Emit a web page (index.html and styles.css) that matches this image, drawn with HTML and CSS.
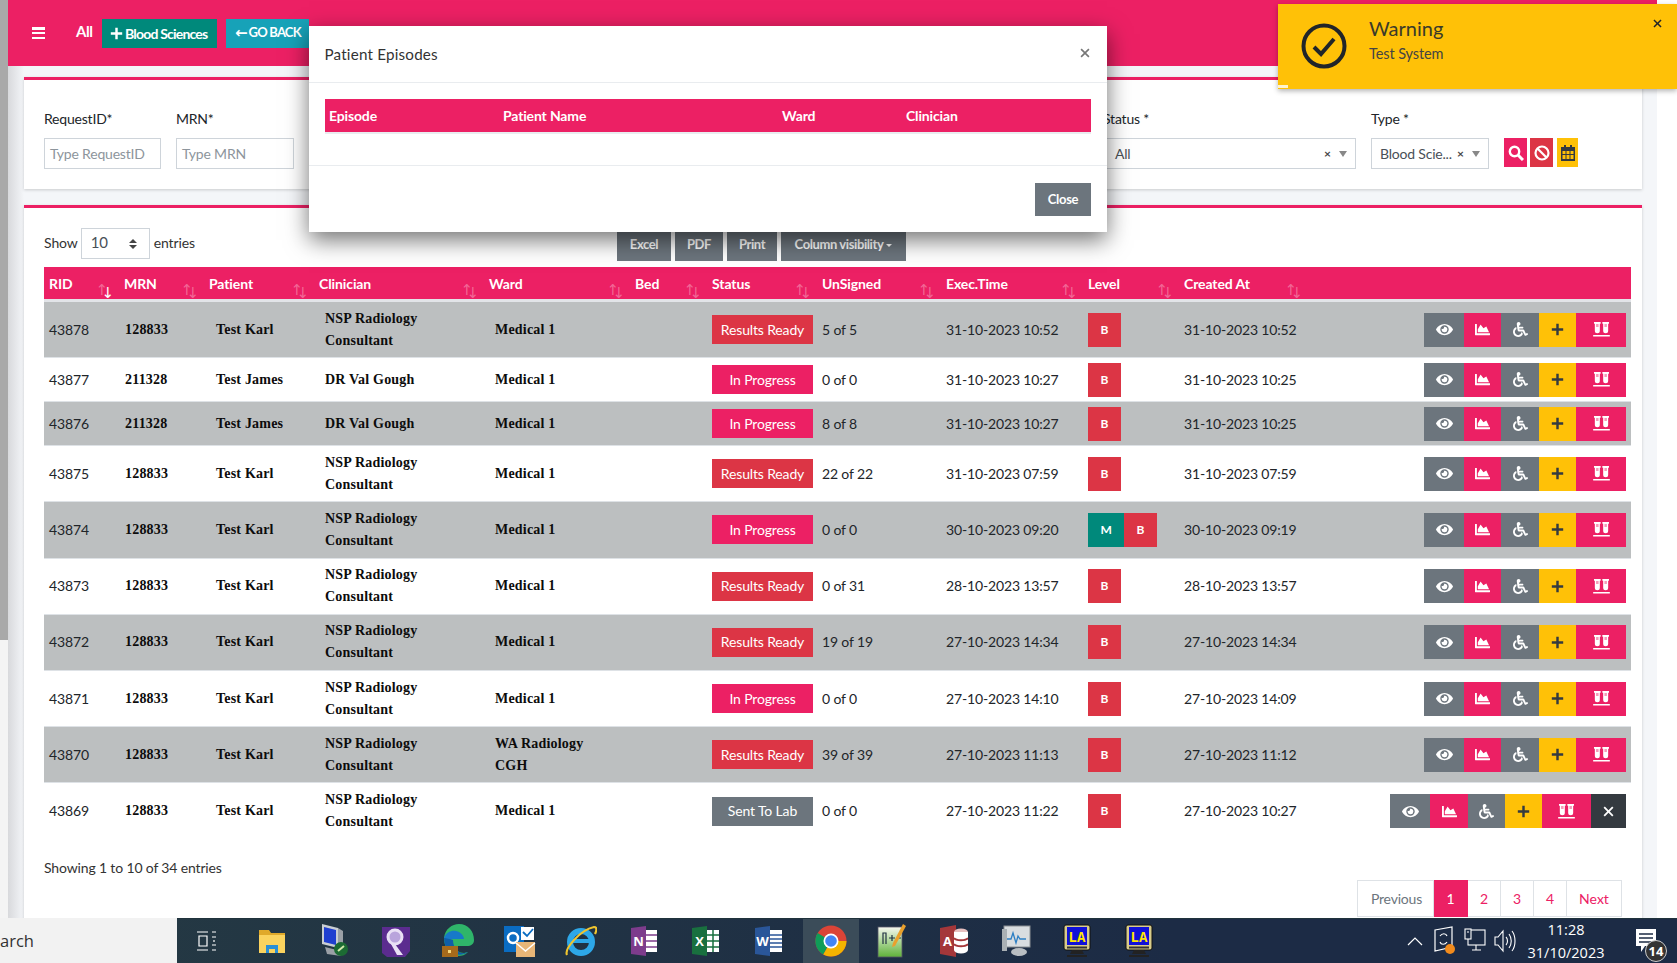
FILE: index.html
```html
<!DOCTYPE html>
<html lang="en">
<head>
<meta charset="utf-8">
<title>Patient Episodes</title>
<link rel="stylesheet" href="styles.css">
</head>
<body>
<svg class="defs" width="0" height="0" aria-hidden="true">
  <symbol id="i-eye" viewBox="0 0 576 512"><path d="M572.52 241.4C518.29 135.59 410.93 64 288 64S57.68 135.64 3.48 241.41a32.35 32.35 0 0 0 0 29.19C57.71 376.41 165.07 448 288 448s230.32-71.64 284.52-177.41a32.35 32.35 0 0 0 0-29.19zM288 400a144 144 0 1 1 144-144 143.93 143.93 0 0 1-144 144zm0-240a95.31 95.31 0 0 0-25.31 3.79 47.85 47.85 0 0 1-66.9 66.9A95.78 95.78 0 1 0 288 160z"/></symbol>
  <symbol id="i-chart" viewBox="0 0 512 512"><path d="M500 384c6.6 0 12 5.4 12 12v40c0 6.6-5.4 12-12 12H12c-6.6 0-12-5.4-12-12V76c0-6.6 5.4-12 12-12h40c6.6 0 12 5.4 12 12v308h436zM372.7 159.5L288 216l-85.3-113.7c-5.1-6.8-15.5-6.3-19.9 1L96 248v104h384l-89.9-187.8c-3.2-6.5-11.4-8.7-17.4-4.7z"/></symbol>
  <symbol id="i-wheel" viewBox="0 0 512 512"><path d="M496.101 385.669l14.227 28.663c3.929 7.915.697 17.516-7.218 21.445l-65.465 32.886c-16.049 7.967-35.556 1.194-43.189-15.055L331.679 320H192c-15.925 0-29.426-11.71-31.679-27.475C126.433 55.308 128.38 70.044 128 64c0-36.358 30.318-65.635 67.052-63.929 33.271 1.545 60.048 28.905 60.925 62.201.868 32.933-23.152 60.423-54.608 65.039l4.67 32.69H336c8.837 0 16 7.163 16 16v32c0 8.837-7.163 16-16 16H215.182l4.572 32H352a32 32 0 0 1 28.962 18.392L438.477 396.8l36.178-18.349c7.915-3.929 17.517-.697 21.446 7.218zM311.358 352h-24.506c-7.788 54.204-54.528 96-110.852 96-61.757 0-112-50.243-112-112 0-41.505 22.694-77.809 56.324-97.156-3.712-25.965-6.844-47.86-9.488-66.333C45.956 198.464 0 261.963 0 336c0 97.047 78.953 176 176 176 71.87 0 133.806-43.308 161.11-105.192L311.358 352z"/></symbol>
  <symbol id="i-plus" viewBox="0 0 16 16"><path d="M6.500 1h3v5.500H15v3H9.500V15h-3V9.500H1v-3h5.500z"/></symbol>
  <symbol id="i-vials" viewBox="0 0 20 18"><path d="M1 0h8v2H8v8.500a3 3 0 0 1-6 0V2H1zM11 0h8v2h-1v8.500a3 3 0 0 1-6 0V2h-1zM0 15.500h20V17.500H0z"/><path class="liquid" d="M3.500 2.500h3V6h-3zM13.500 2.500h3V6h-3z"/></symbol>
  <symbol id="i-x" viewBox="0 0 12 12"><path d="M2 .6 6 4.600 10 .6 11.400 2 7.400 6l4 4-1.400 1.400-4-4-4 4L.6 10l4-4-4-4z"/></symbol>
</svg>

<div class="app">
  <div class="page">
    <div class="strip"></div>
    <main class="main">
      <header class="topbar">
        <span class="burger"><i></i><i></i><i></i></span>
        <span class="top-all">All</span>
        <a class="top-btn teal"><svg class="ic-13"><use href="#i-plus"/></svg>Blood Sciences</a>
        <a class="top-btn cyan"><span class="back-arrow">&#8592;</span>GO BACK</a>
      </header>

      <section class="card filter">
        <div class="field f-req"><label>RequestID*</label><div class="input ph">Type RequestID</div></div>
        <div class="field f-mrn"><label>MRN*</label><div class="input ph">Type MRN</div></div>
        <div class="filter-gap"></div>
        <div class="field f-status"><label>Status *</label>
          <div class="input sel"><span class="sel-text">All</span><span class="sel-x">&#215;</span><span class="sel-caret"></span></div></div>
        <div class="field f-type"><label>Type *</label>
          <div class="input sel"><span class="sel-text">Blood Scie...</span><span class="sel-x">&#215;</span><span class="sel-caret"></span></div></div>
        <div class="tools">
          <a class="tool pink"><svg width="16" height="16" viewBox="0 0 16 16" fill="none" stroke="#fff" stroke-width="2.400"><circle cx="6.500" cy="6.500" r="4.700"/><path d="M10 10l5 5" stroke-width="3"/></svg></a>
          <a class="tool red"><svg width="16" height="16" viewBox="0 0 16 16" fill="none" stroke="#fff" stroke-width="2.200"><circle cx="8" cy="8" r="6.500"/><path d="M3.500 3.500l9 9"/></svg></a>
          <a class="tool amber narrow"><svg width="14" height="16" viewBox="0 0 14 16"><path fill="#343a40" d="M3 0h2v2h4V0h2v2h3v14H0V2h3zM1.500 6v3h3V6zm4 0v3h3V6zm4 0v3h3V6zm-8 4v4h3v-4zm4 0v4h3v-4zm4 0v4h3v-4z"/></svg></a>
        </div>
      </section>

      <section class="card results">
        <div class="dt-top">
          <div class="len"><span class="len-txt">Show</span> <span class="len-select">10<span class="updown"></span></span> <span class="len-txt">entries</span></div>
          <div class="exports">
            <a class="exp">Excel</a><a class="exp">PDF</a><a class="exp">Print</a><a class="exp exp-col">Column visibility<span class="mini-caret"></span></a>
          </div>
        </div>

        <table class="grid">
          <colgroup>
            <col class="c1"><col class="c2"><col class="c3"><col class="c4"><col class="c5"><col class="c6"><col class="c7"><col class="c8"><col class="c9"><col class="c10"><col class="c11"><col class="c12">
          </colgroup>
          <thead>
            <tr>
              <th class="sort first">RID</th><th class="sort">MRN</th><th class="sort">Patient</th><th class="sort">Clinician</th><th class="sort">Ward</th><th class="sort">Bed</th><th class="sort">Status</th><th class="sort">UnSigned</th><th class="sort">Exec.Time</th><th class="sort">Level</th><th class="sort">Created At</th><th></th>
            </tr>
          </thead>
          <tbody>
            <tr class="odd tall"><td>43878</td><td class="mrn">128833</td><td class="sf pat">Test Karl</td><td class="sf">NSP Radiology<br>Consultant</td><td class="sf">Medical 1</td><td></td><td><span class="st red">Results Ready</span></td><td>5 of 5</td><td>31-10-2023 10:52</td><td><span class="lv red">B</span></td><td>31-10-2023 10:52</td>
              <td class="acts"><span class="act-group"><a class="act a1 gray"><svg class="ic-eye"><use href="#i-eye"/></svg></a><a class="act a2 pink"><svg class="ic-16"><use href="#i-chart"/></svg></a><a class="act a3 gray"><svg class="ic-16"><use href="#i-wheel"/></svg></a><a class="act a4 amber"><svg class="ic-13 dark"><use href="#i-plus"/></svg></a><a class="act a5 pink"><svg class="ic-vials"><use href="#i-vials"/></svg></a></span></td></tr>
            <tr class="short"><td>43877</td><td class="mrn">211328</td><td class="sf pat">Test James</td><td class="sf">DR Val Gough</td><td class="sf">Medical 1</td><td></td><td><span class="st pink">In Progress</span></td><td>0 of 0</td><td>31-10-2023 10:27</td><td><span class="lv red">B</span></td><td>31-10-2023 10:25</td>
              <td class="acts"><span class="act-group"><a class="act a1 gray"><svg class="ic-eye"><use href="#i-eye"/></svg></a><a class="act a2 pink"><svg class="ic-16"><use href="#i-chart"/></svg></a><a class="act a3 gray"><svg class="ic-16"><use href="#i-wheel"/></svg></a><a class="act a4 amber"><svg class="ic-13 dark"><use href="#i-plus"/></svg></a><a class="act a5 pink"><svg class="ic-vials"><use href="#i-vials"/></svg></a></span></td></tr>
            <tr class="odd short"><td>43876</td><td class="mrn">211328</td><td class="sf pat">Test James</td><td class="sf">DR Val Gough</td><td class="sf">Medical 1</td><td></td><td><span class="st pink">In Progress</span></td><td>8 of 8</td><td>31-10-2023 10:27</td><td><span class="lv red">B</span></td><td>31-10-2023 10:25</td>
              <td class="acts"><span class="act-group"><a class="act a1 gray"><svg class="ic-eye"><use href="#i-eye"/></svg></a><a class="act a2 pink"><svg class="ic-16"><use href="#i-chart"/></svg></a><a class="act a3 gray"><svg class="ic-16"><use href="#i-wheel"/></svg></a><a class="act a4 amber"><svg class="ic-13 dark"><use href="#i-plus"/></svg></a><a class="act a5 pink"><svg class="ic-vials"><use href="#i-vials"/></svg></a></span></td></tr>
            <tr class="tall"><td>43875</td><td class="mrn">128833</td><td class="sf pat">Test Karl</td><td class="sf">NSP Radiology<br>Consultant</td><td class="sf">Medical 1</td><td></td><td><span class="st red">Results Ready</span></td><td>22 of 22</td><td>31-10-2023 07:59</td><td><span class="lv red">B</span></td><td>31-10-2023 07:59</td>
              <td class="acts"><span class="act-group"><a class="act a1 gray"><svg class="ic-eye"><use href="#i-eye"/></svg></a><a class="act a2 pink"><svg class="ic-16"><use href="#i-chart"/></svg></a><a class="act a3 gray"><svg class="ic-16"><use href="#i-wheel"/></svg></a><a class="act a4 amber"><svg class="ic-13 dark"><use href="#i-plus"/></svg></a><a class="act a5 pink"><svg class="ic-vials"><use href="#i-vials"/></svg></a></span></td></tr>
            <tr class="odd tall"><td>43874</td><td class="mrn">128833</td><td class="sf pat">Test Karl</td><td class="sf">NSP Radiology<br>Consultant</td><td class="sf">Medical 1</td><td></td><td><span class="st pink">In Progress</span></td><td>0 of 0</td><td>30-10-2023 09:20</td><td><span class="lv teal">M</span><span class="lv red">B</span></td><td>30-10-2023 09:19</td>
              <td class="acts"><span class="act-group"><a class="act a1 gray"><svg class="ic-eye"><use href="#i-eye"/></svg></a><a class="act a2 pink"><svg class="ic-16"><use href="#i-chart"/></svg></a><a class="act a3 gray"><svg class="ic-16"><use href="#i-wheel"/></svg></a><a class="act a4 amber"><svg class="ic-13 dark"><use href="#i-plus"/></svg></a><a class="act a5 pink"><svg class="ic-vials"><use href="#i-vials"/></svg></a></span></td></tr>
            <tr class="tall"><td>43873</td><td class="mrn">128833</td><td class="sf pat">Test Karl</td><td class="sf">NSP Radiology<br>Consultant</td><td class="sf">Medical 1</td><td></td><td><span class="st red">Results Ready</span></td><td>0 of 31</td><td>28-10-2023 13:57</td><td><span class="lv red">B</span></td><td>28-10-2023 13:57</td>
              <td class="acts"><span class="act-group"><a class="act a1 gray"><svg class="ic-eye"><use href="#i-eye"/></svg></a><a class="act a2 pink"><svg class="ic-16"><use href="#i-chart"/></svg></a><a class="act a3 gray"><svg class="ic-16"><use href="#i-wheel"/></svg></a><a class="act a4 amber"><svg class="ic-13 dark"><use href="#i-plus"/></svg></a><a class="act a5 pink"><svg class="ic-vials"><use href="#i-vials"/></svg></a></span></td></tr>
            <tr class="odd tall"><td>43872</td><td class="mrn">128833</td><td class="sf pat">Test Karl</td><td class="sf">NSP Radiology<br>Consultant</td><td class="sf">Medical 1</td><td></td><td><span class="st red">Results Ready</span></td><td>19 of 19</td><td>27-10-2023 14:34</td><td><span class="lv red">B</span></td><td>27-10-2023 14:34</td>
              <td class="acts"><span class="act-group"><a class="act a1 gray"><svg class="ic-eye"><use href="#i-eye"/></svg></a><a class="act a2 pink"><svg class="ic-16"><use href="#i-chart"/></svg></a><a class="act a3 gray"><svg class="ic-16"><use href="#i-wheel"/></svg></a><a class="act a4 amber"><svg class="ic-13 dark"><use href="#i-plus"/></svg></a><a class="act a5 pink"><svg class="ic-vials"><use href="#i-vials"/></svg></a></span></td></tr>
            <tr class="tall"><td>43871</td><td class="mrn">128833</td><td class="sf pat">Test Karl</td><td class="sf">NSP Radiology<br>Consultant</td><td class="sf">Medical 1</td><td></td><td><span class="st pink">In Progress</span></td><td>0 of 0</td><td>27-10-2023 14:10</td><td><span class="lv red">B</span></td><td>27-10-2023 14:09</td>
              <td class="acts"><span class="act-group"><a class="act a1 gray"><svg class="ic-eye"><use href="#i-eye"/></svg></a><a class="act a2 pink"><svg class="ic-16"><use href="#i-chart"/></svg></a><a class="act a3 gray"><svg class="ic-16"><use href="#i-wheel"/></svg></a><a class="act a4 amber"><svg class="ic-13 dark"><use href="#i-plus"/></svg></a><a class="act a5 pink"><svg class="ic-vials"><use href="#i-vials"/></svg></a></span></td></tr>
            <tr class="odd tall"><td>43870</td><td class="mrn">128833</td><td class="sf pat">Test Karl</td><td class="sf">NSP Radiology<br>Consultant</td><td class="sf">WA Radiology<br>CGH</td><td></td><td><span class="st red">Results Ready</span></td><td>39 of 39</td><td>27-10-2023 11:13</td><td><span class="lv red">B</span></td><td>27-10-2023 11:12</td>
              <td class="acts"><span class="act-group"><a class="act a1 gray"><svg class="ic-eye"><use href="#i-eye"/></svg></a><a class="act a2 pink"><svg class="ic-16"><use href="#i-chart"/></svg></a><a class="act a3 gray"><svg class="ic-16"><use href="#i-wheel"/></svg></a><a class="act a4 amber"><svg class="ic-13 dark"><use href="#i-plus"/></svg></a><a class="act a5 pink"><svg class="ic-vials"><use href="#i-vials"/></svg></a></span></td></tr>
            <tr class="tall"><td>43869</td><td class="mrn">128833</td><td class="sf pat">Test Karl</td><td class="sf">NSP Radiology<br>Consultant</td><td class="sf">Medical 1</td><td></td><td><span class="st gray">Sent To Lab</span></td><td>0 of 0</td><td>27-10-2023 11:22</td><td><span class="lv red">B</span></td><td>27-10-2023 10:27</td>
              <td class="acts"><span class="act-group"><a class="act a1 gray"><svg class="ic-eye"><use href="#i-eye"/></svg></a><a class="act a3 pink"><svg class="ic-16"><use href="#i-chart"/></svg></a><a class="act a4 gray"><svg class="ic-16"><use href="#i-wheel"/></svg></a><a class="act a4 amber"><svg class="ic-13 dark"><use href="#i-plus"/></svg></a><a class="act a5b pink"><svg class="ic-vials"><use href="#i-vials"/></svg></a><a class="act a6 dark-bg"><svg class="ic-11"><use href="#i-x"/></svg></a></span></td></tr>
          </tbody>
        </table>

        <div class="dt-info">Showing 1 to 10 of 34 entries</div>
        <nav class="pager">
          <a class="pg prev">Previous</a><a class="pg on">1</a><a class="pg">2</a><a class="pg">3</a><a class="pg">4</a><a class="pg next">Next</a>
        </nav>
      </section>
    </main>
  </div>

  <footer class="taskbar">
    <div class="search">arch</div>
    <div class="tb-icons">
      <span class="tb t-view"><svg width="22" height="22" viewBox="0 0 22 22" fill="none" stroke="#fff" stroke-width="1.200"><path d="M1 2h11M1 20h11M3 6h8v10H3zM16 2h4M16 20h4M16 7h4M16 15h4M18 10v2"/></svg></span>
      <span class="tb t-files"><svg width="28" height="28" viewBox="0 0 28 28"><path fill="#e0a92a" d="M1 3h10l2 3h14v20H1z"/><path fill="#fbd35e" d="M1 8h26v18H1z"/><path fill="#2a8fd6" d="M8 18h12v8h-3v-4h-6v4H8z"/></svg></span>
      <span class="tb t-net"><svg width="30" height="34" viewBox="0 0 30 34"><path fill="#c9ced3" d="M3 0l16 4v20L3 20z"/><path fill="#1f3fd0" d="M5 3l12 3v15L5 18z"/><path fill="#9aa0a6" d="M19 4l5 3v18l-5-1zM6 23l16 4v5l-14-2z"/><circle cx="22" cy="25" r="7" fill="#1c6b33"/><path d="M19 27l6-5" stroke="#cfe8a8" stroke-width="2"/></svg></span>
      <span class="tb t-q"><svg width="30" height="34" viewBox="0 0 30 34"><path fill="#5b2c8f" d="M2 3h28v24l-5 6H7l-5-4z"/><circle cx="15" cy="13" r="7" fill="#b9a4dc" stroke="#e9e0f5" stroke-width="3"/><path d="M15 20l8 11h-6l-6-11z" fill="#e9e0f5"/></svg></span>
      <span class="tb t-edge"><svg width="32" height="34" viewBox="0 0 32 34"><path fill="#2fb56a" d="M2 14C3 5 10 0 17 0c9 0 15 7 15 16 0 4-3 6-7 6H13c0 4 4 7 9 7l4-1c-3 3-6 4-10 4C8 32 2 24 2 14z"/><path fill="#1779c9" d="M2 14c2-6 8-8 12-7 5 1 8 5 8 8H11c-3 0-9 3-9-1z"/><path fill="#0f5ea8" d="M11 16c0 9 7 16 15 12-8 6-24 2-24-14 2 0 6 1 9 2z"/><rect x="0" y="22" width="16" height="11" fill="#a66a1c"/><rect x="6" y="26" width="3" height="3" fill="#f7d67a"/></svg></span>
      <span class="tb t-out"><svg width="32" height="34" viewBox="0 0 32 34"><rect x="0" y="2" width="20" height="26" fill="#0a6cc2"/><circle cx="9" cy="14" r="5" fill="none" stroke="#fff" stroke-width="2.500"/><rect x="17" y="3" width="13" height="13" fill="#fff"/><path d="M19 8l4 4 6-7" fill="none" stroke="#0a6cc2" stroke-width="1.800"/><rect x="12" y="18" width="19" height="15" fill="#e8b677"/><path d="M12 19l9.500 8L31 19" fill="none" stroke="#fff" stroke-width="1.500"/></svg></span>
      <span class="tb t-ie"><svg width="32" height="32" viewBox="0 0 32 32"><circle cx="16" cy="17" r="11" fill="none" stroke="#2da7e8" stroke-width="6"/><path d="M7 16h18" stroke="#2da7e8" stroke-width="4"/><path d="M2 30C-1 24 15 5 29 2c3 0 3 3 1 7" fill="none" stroke="#f0c52f" stroke-width="2.200"/></svg></span>
      <span class="tb t-one"><svg width="28" height="30" viewBox="0 0 28 30"><path fill="#7d3c8c" d="M0 2l15-2v30L0 28z"/><rect x="15" y="4" width="11" height="22" fill="#fff"/><path d="M15 9h11M15 15h11M15 21h11" stroke="#7d3c8c" stroke-width="1.500"/><text class="ms-l" x="7.500" y="20">N</text></svg></span>
      <span class="tb t-xl"><svg width="28" height="30" viewBox="0 0 28 30"><path fill="#19703f" d="M0 2l15-2v30L0 28z"/><rect x="15" y="4" width="12" height="22" fill="#fff"/><path d="M15 9h12M15 15h12M15 21h12M21 4v22" stroke="#19703f" stroke-width="1.500"/><text class="ms-l" x="7.500" y="20">X</text></svg></span>
      <span class="tb t-wd"><svg width="28" height="30" viewBox="0 0 28 30"><path fill="#2a5699" d="M0 2l15-2v30L0 28z"/><rect x="15" y="4" width="12" height="22" fill="#fff"/><path d="M15 9h12M15 13h12M15 17h12M15 21h12" stroke="#2a5699" stroke-width="1.500"/><text class="ms-l" x="7.500" y="20">W</text></svg></span>
      <span class="tb t-ch active"><svg width="32" height="32" viewBox="0 0 32 32"><circle cx="16" cy="16" r="15.500" fill="#db4437"/><path fill="#0f9d58" d="M16 16L8.300 29.500A15.500 15.500 0 0 1 2.600 8z"/><path fill="#f4b400" d="M16 16h15.500A15.500 15.500 0 0 1 8.300 29.500z"/><circle cx="16" cy="16" r="7.500" fill="#fff"/><circle cx="16" cy="16" r="5.800" fill="#4285f4"/></svg></span>
      <span class="tb t-np"><svg width="30" height="34" viewBox="0 0 30 34"><defs><linearGradient id="npg" x1="0" y1="0" x2="0" y2="1"><stop offset="0" stop-color="#f5f7ef"/><stop offset="1" stop-color="#5fb23a"/></linearGradient></defs><rect x="1" y="3" width="24" height="30" fill="url(#npg)" stroke="#556" stroke-width=".8"/><path d="M6 20V9h3v11M12 14h6M15 11v6M20 14h4" stroke="#234" stroke-width="1.200" fill="none"/><path d="M26 0l3 2-11 20-3 1 1-4z" fill="#e9a02c"/></svg></span>
      <span class="tb t-ac"><svg width="28" height="32" viewBox="0 0 28 32"><path fill="#a4373a" d="M0 3l16-3v32L0 29z"/><ellipse cx="21" cy="7" rx="7" ry="3.500" fill="#e8c1c1"/><rect x="14" y="7" width="14" height="18" fill="#fff"/><ellipse cx="21" cy="25" rx="7" ry="3.500" fill="#fff"/><path d="M14 13c2 3 12 3 14 0M14 19c2 3 12 3 14 0" stroke="#a4373a" stroke-width="2" fill="none"/><text class="ms-l" x="7.500" y="21">A</text></svg></span>
      <span class="tb t-pm"><svg width="30" height="32" viewBox="0 0 30 32"><rect x="3" y="1" width="26" height="21" fill="#d9dde0" stroke="#8b9094"/><path d="M5 14h5l2-6 3 10 2-7 2 3h6" fill="none" stroke="#2d7fc4" stroke-width="1.300"/><rect x="1" y="4" width="5" height="22" fill="#aab0b4"/><ellipse cx="18" cy="27" rx="8" ry="4" fill="#b9bec2"/></svg></span>
      <span class="tb t-la"><svg width="28" height="34" viewBox="0 0 28 34"><rect x="1" y="1" width="26" height="25" rx="2" fill="#d8cb8a" stroke="#111"/><rect x="4" y="3" width="20" height="18" fill="#1010d8"/><text class="la-l" x="14" y="18">LA</text><rect x="4" y="22.500" width="20" height="2" fill="#333"/><path d="M9 26h10l2 4H7zM4 31h20v2H4z" fill="#222"/></svg></span>
      <span class="tb t-la"><svg width="28" height="34" viewBox="0 0 28 34"><rect x="1" y="1" width="26" height="25" rx="2" fill="#d8cb8a" stroke="#111"/><rect x="4" y="3" width="20" height="18" fill="#1010d8"/><text class="la-l" x="14" y="18">LA</text><rect x="4" y="22.500" width="20" height="2" fill="#333"/><path d="M9 26h10l2 4H7zM4 31h20v2H4z" fill="#222"/></svg></span>
    </div>
    <div class="tray">
      <svg class="tr-up" width="16" height="10" viewBox="0 0 16 10" fill="none" stroke="#fff" stroke-width="1.200"><path d="M1 9l7-7 7 7"/></svg>
      <svg class="tr-sync" width="22" height="30" viewBox="0 0 22 30"><path fill="none" stroke="#fff" stroke-width="1.200" d="M1 4l17-3v20L1 25z"/><path fill="none" stroke="#fff" stroke-width="1.200" d="M6 10c2-3 6-3 7 0M13 16c-2 3-6 3-7 0"/><circle cx="16" cy="23" r="5" fill="#f28b1c"/></svg>
      <svg class="tr-net" width="22" height="26" viewBox="0 0 22 26" fill="none" stroke="#fff" stroke-width="1.100"><rect x="4" y="2" width="17" height="15"/><rect x="1" y="1" width="6" height="10" fill="#1c2b44"/><path d="M3 4h2M12 17v5M8 22h9"/></svg>
      <svg class="tr-vol" width="22" height="26" viewBox="0 0 22 26" fill="none" stroke="#fff" stroke-width="1.100"><path d="M1 9h3l5-6v20l-5-6H1zM12 9c2 2 2 6 0 8M15 6c3 4 3 10 0 14M18 3c4 5 4 15 0 20"/></svg>
      <div class="clock"><span>11:28</span><span>31/10/2023</span></div>
      <span class="notif"><svg width="20" height="24" viewBox="0 0 20 24"><path fill="#fff" d="M0 0h20v17H9l-4 6v-6H0z"/><path stroke="#1c2b44" stroke-width="1.400" d="M3 5h14M3 9h14M3 13h14"/></svg><b class="notif-n">14</b></span>
    </div>
  </footer>

  <div class="modal" role="dialog">
    <div class="modal-head"><h5>Patient Episodes</h5><svg class="modal-x"><use href="#i-x"/></svg></div>
    <div class="modal-body">
      <div class="ep-head"><span class="ep1">Episode</span><span class="ep2">Patient Name</span><span class="ep3">Ward</span><span class="ep4">Clinician</span></div>
    </div>
    <div class="modal-foot"><a class="close-btn">Close</a></div>
  </div>

  <div class="toast">
    <svg class="toast-ic" width="46" height="46" viewBox="0 0 46 46" fill="none" stroke="#212529"><circle cx="23" cy="23" r="20.500" stroke-width="4"/><path d="M13 24l7 7 13-15" stroke-width="4"/></svg>
    <div class="toast-txt"><div class="toast-t">Warning</div><div class="toast-s">Test System</div></div>
    <svg class="toast-x"><use href="#i-x"/></svg>
    <span class="toast-bar"></span>
  </div>
</div>
</body>
</html>
```
FILE: styles.css
```css
* { box-sizing: border-box; }
html, body { margin: 0; height: 100%; overflow: hidden; background: #fff; }
body { font: 14px/1.5 Lato, "Open Sans", sans-serif; color: #212529; }
a { text-decoration: none; color: inherit; }
.defs { position: absolute; }

.app { position: relative; display: flex; flex-direction: column; width: 1677px; height: 963px; overflow: hidden; }
.page { flex: 1; min-height: 0; display: flex; overflow: hidden; }
.strip { width: 8px; flex: none; background: linear-gradient(#a9a9a9 640px, #f4f4f4 640px); }
.main { width: 1649px; flex: none; overflow: hidden; background: linear-gradient(90deg, #d8d9dc, #f4f6f9 16px); }

/* shared colours */
.pink { background: #ec2064; color: #fff; fill: #fff; }
.red { background: #dc3545; color: #fff; }
.gray { background: #6c757d; color: #fff; fill: #fff; }
.teal { background: #00897b; color: #fff; fill: #fff; }
.cyan { background: #17a2b8; color: #fff; }
.amber { background: #ffc107; }
.dark-bg { background: #343a40; fill: #fff; }

/* top bar */
.topbar { height: 66px; background: #ec2064; display: flex; align-items: center; padding-left: 24px; color: #fff; font-weight: 700; letter-spacing: -.5px; }
.burger { width: 13px; height: 12px; display: flex; flex-direction: column; justify-content: space-between; margin-right: 31px; }
.burger i { height: 2.500px; background: #fff; }
.top-all { margin-right: 7px; margin-top: -3px; width: 19px; font-size: 15px; }
.top-btn { height: 29px; display: inline-flex; align-items: center; padding: 0 8px; margin-right: 9px; white-space: nowrap; letter-spacing: -.8px; }
.top-btn.teal { width: 115px; }
.top-btn.cyan { width: 83px; font-size: 13px; padding-left: 9px; }
.ic-13 { width: 13px; height: 13px; flex: none; }
.top-btn .ic-13 { margin-right: 2px; }
.back-arrow { font: 700 15px "DejaVu Sans", sans-serif; margin-right: 1px; letter-spacing: 0; }

/* cards */
.card { background: #fff; border-top: 3px solid #ec2064; box-shadow: 0 1px 3px rgba(0,0,0,.18); margin-right: 15px; margin-left: 16px; }
.filter { margin-top: 11px; height: 112px; display: flex; padding: 29px 64px 0 20px; }
.results { margin-top: 16px; height: 720px; padding: 20px 11px 0 20px; }

/* filter form */
.field label { display: block; height: 20px; line-height: 20px; margin-bottom: 9px; letter-spacing: -.2px; color: #212529; }
.f-req { width: 117px; margin-right: 15px; }
.f-mrn { width: 118px; }
.filter-gap { flex: 1; }
.f-status { width: 253px; margin-right: 15px; }
.f-type { width: 118px; margin-right: 15px; }
.input { height: 31px; border: 1px solid #ced4da; padding: 0 5px; line-height: 29px; letter-spacing: -.2px; }
.ph { color: #8d959c; }
.sel { display: flex; align-items: center; color: #495057; }
.sel-text { flex: 1; white-space: nowrap; overflow: hidden; padding-left: 3px; }
.f-status .sel-text { padding-left: 6px; }
.sel-x { font-weight: 700; font-size: 12px; width: 13px; color: #444; }
.sel-caret { width: 0; height: 0; border: 4px solid transparent; border-top: 6px solid #888; border-bottom: 0; margin: 0 3px 0 2px; }
.tools { display: flex; gap: 3px; padding-top: 29px; }
.tool { width: 23px; height: 29px; display: flex; align-items: center; justify-content: center; }
.tool.narrow { width: 21px; margin-left: 1px; }

/* datatable controls */
.dt-top { display: flex; height: 33px; margin-bottom: 6px; }
.len { width: 573px; height: 31px; display: flex; align-items: center; gap: 3px; letter-spacing: -.1px; color: #333; }
.len-txt { margin-top: -3px; }
.len-select { width: 69px; height: 31px; border: 1px solid #ced4da; display: flex; align-items: center; padding: 0 0 2px 9px; margin-right: 1px; color: #495057; position: relative; font-size: 15px; }
.updown { position: absolute; right: 12px; top: 10px; width: 0; height: 0; border: 4px solid transparent; border-top: 0; border-bottom: 4px solid #444; }
.updown::after { content: ""; position: absolute; left: -4px; top: 6px; border: 4px solid transparent; border-bottom: 0; border-top: 4px solid #444; }
.exports { display: flex; gap: 4px; align-items: flex-end; }
.exp { height: 29px; background: #6c757d; color: #fff; font-weight: 700; font-size: 13px; letter-spacing: -.4px; display: flex; align-items: center; justify-content: center; width: 54px; padding-bottom: 3px; }
.exports .exp:nth-child(2) { width: 48px; }
.exports .exp:nth-child(3) { width: 50px; }
.exp-col { width: 125px !important; }
.mini-caret { margin-left: 3px; border: 3px solid transparent; border-top: 3px solid #fff; border-bottom: 0; }

/* table */
.grid { width: 1587px; table-layout: fixed; border-collapse: separate; border-spacing: 0; }
.c1 { width: 75px; } .c2 { width: 85px; } .c3 { width: 110px; } .c4 { width: 170px; } .c5 { width: 146px; } .c6 { width: 77px; }
.c7 { width: 110px; } .c8 { width: 124px; } .c9 { width: 142px; } .c10 { width: 96px; } .c11 { width: 129px; } .c12 { width: 323px; }
.grid th { height: 35px; background: #ec2064; background-clip: padding-box; border-bottom: 3px solid #e2e4e8; color: #fff; text-align: left; font-weight: 700; padding: 0 5px; letter-spacing: -.1px; position: relative; }
.sort::before, .sort::after { position: absolute; font: 400 15px/1 "DejaVu Sans", sans-serif; color: rgba(255,255,255,.32); bottom: 1px; letter-spacing: 0; }
.sort::before { content: "\2191"; right: 11px; }
.sort::after { content: "\2193"; right: 5px; bottom: -2px; }
.first::after { color: #fff; }
.grid td { padding: 0 5px; vertical-align: middle; border-bottom: 1px solid #dee2e6; white-space: nowrap; line-height: 22px; letter-spacing: -.15px; }
.grid tbody tr:last-child td { border-bottom: 0; }
.tall { height: 56.200px; }
.short { height: 44px; }
.odd td { background: #bcbfc0; }
.grid td.sf, .grid td.mrn { font: 700 14px/22px "Liberation Serif", serif; color: #0c0c0c; letter-spacing: .2px; }
.grid td.sf { padding-left: 11px; }
.grid td.pat { padding-left: 12px; }
.grid td.mrn { padding-left: 6px; }
.st { display: flex; align-items: center; justify-content: center; width: 101px; height: 29px; }
.lv { display: inline-flex; align-items: center; justify-content: center; width: 33px; height: 34px; font-weight: 700; font-size: 12px; vertical-align: middle; }
.lv.teal { width: 36px; }
.acts { text-align: right; }
.act-group { display: inline-flex; vertical-align: middle; }
.act { height: 34px; display: flex; align-items: center; justify-content: center; }
.a1 { width: 40px; } .a2 { width: 37px; } .a3 { width: 38px; } .a4 { width: 37px; } .a5 { width: 50px; } .a5b { width: 49px; } .a6 { width: 35px; }
.ic-eye { width: 17px; height: 15px; fill: #fff; }
.ic-16 { width: 15px; height: 15px; fill: #fff; }
.dark { fill: #343a40; }
.ic-vials { width: 17px; height: 15px; fill: #fff; }
.liquid { fill: #ec2064; opacity: .45; }
.ic-11 { width: 11px; height: 11px; }

.dt-info { margin-top: 17px; line-height: 22px; letter-spacing: -.15px; color: #333; }
.pager { display: flex; justify-content: flex-end; margin: 1px 9px 0 0; height: 37px; }
.pg { height: 37px; border: 1px solid #dee2e6; border-left-width: 0; color: #ec2064; display: flex; align-items: center; justify-content: center; width: 33px; }
.prev { border-left-width: 1px; width: 77px; color: #6c757d; letter-spacing: -.2px; padding-left: 2px; }
.next { width: 55px; }
.on { background: #ec2064; color: #fff; border-color: #ec2064; width: 34px; }

/* taskbar */
.taskbar { height: 45px; flex: none; display: flex; align-items: center; background: linear-gradient(90deg, #253a43, #1c2b45 70%); color: #fff; border-top: 1px solid #20333c; }
.search { width: 177px; height: 45px; flex: none; background: #f2f2f2; color: #333; font: 16.500px/46px "Open Sans", sans-serif; margin-top: -1px; }
.tb-icons { display: flex; align-items: center; height: 100%; padding-left: 15px; }
.tb { width: 62px; height: 44px; display: flex; align-items: center; justify-content: center; flex: none; }
.t-view { width: 30px; margin-right: 35px; }
.t-files { width: 30px; margin-right: 32px; }
.t-net { width: 30px; margin-right: 31px; }
.t-q { width: 30px; margin-right: 32px; }
.t-edge { width: 32px; margin-right: 30px; }
.t-out { width: 32px; margin-right: 29px; }
.t-ie { width: 32px; margin-right: 34px; }
.t-one { width: 28px; margin-right: 33px; }
.t-xl { width: 28px; margin-right: 35px; }
.t-wd { width: 28px; margin-right: 20px; }
.t-ch { width: 56px; margin-right: 18px; }
.active { background: #3b4c59; }
.t-np { width: 30px; margin-right: 33px; }
.t-ac { width: 28px; margin-right: 33px; }
.t-pm { width: 30px; margin-right: 32px; }
.t-la { width: 28px; margin-right: 34px; }
.ms-l { font: 700 13px "Open Sans", sans-serif; fill: #fff; text-anchor: middle; }
.la-l { font: 700 14px "Liberation Mono", monospace; fill: #ffe600; text-anchor: middle; }
.tray { margin-left: auto; display: flex; align-items: center; height: 100%; position: relative; }
.tr-up { margin-right: 11px; }
.tr-sync { margin-right: 8px; }
.tr-net { margin-right: 8px; }
.tr-vol { margin-right: 9px; }
.clock { width: 82px; display: flex; flex-direction: column; align-items: center; font: 14.500px/23px "Open Sans", sans-serif; margin-right: 26px; }
.notif { position: relative; width: 32px; height: 44px; display: flex; align-items: flex-start; padding: 10px 0 0 3px; margin-right: 12px; }
.notif-n { position: absolute; left: 12px; top: 21px; width: 22px; height: 22px; border-radius: 50%; background: #333; border: 1px solid #ccc; font: 700 13px/20px "Open Sans", sans-serif; text-align: center; }

/* modal */
.modal { position: absolute; left: 309px; top: 26px; width: 798px; height: 206px; background: #fff; box-shadow: 0 8px 22px rgba(0,0,0,.55); display: flex; flex-direction: column; }
.modal-head { height: 57px; flex: none; display: flex; align-items: center; justify-content: space-between; border-bottom: 1px solid #e9ecef; padding: 0 15px 0 15.500px; }
.modal-head h5 { margin: 0; font: 400 15.200px/1.2 Lato, sans-serif; color: #333; letter-spacing: .2px; }
.modal-x { width: 10px; height: 10px; fill: #777; margin-top: -2px; margin-right: 2px; }
.modal-body { height: 83px; flex: none; padding: 16px; border-bottom: 1px solid #e9ecef; }
.ep-head { height: 35px; width: 766px; background: #ec2064; border-bottom: 2px solid #e9ecef; display: flex; align-items: center; color: #fff; font-weight: 700; letter-spacing: -.15px; background-clip: padding-box; }
.ep-head span { padding-left: 4px; }
.ep1 { width: 174px; } .ep2 { width: 279px; } .ep3 { width: 124px; } .ep4 { width: 189px; }
.modal-foot { flex: 1; display: flex; justify-content: flex-end; align-items: flex-start; padding: 17px 16px 0; }
.close-btn { width: 56px; height: 33px; background: #6c757d; color: #fff; font-weight: 700; font-size: 13px; letter-spacing: -.3px; display: flex; align-items: center; justify-content: center; }

/* toast */
.toast { position: absolute; left: 1278px; top: 4px; width: 399px; height: 85px; background: #ffc107; box-shadow: 0 2px 5px rgba(0,0,0,.3); display: flex; color: #212529; }
.toast-ic { margin: 19px 22px 0 23px; flex: none; }
.toast-t { font: 400 20px/1 Lato, sans-serif; margin-top: 14px; letter-spacing: 0; color: #3a3a2a; }
.toast-s { font-size: 14.500px; line-height: 20px; margin-top: 6px; letter-spacing: -.1px; color: #444; }
.toast-x { position: absolute; right: 15px; top: 15px; width: 9px; height: 9px; fill: #212529; }
.toast-bar { position: absolute; left: 0; bottom: 1px; width: 10px; height: 3px; background: #fff3cd; }
```
